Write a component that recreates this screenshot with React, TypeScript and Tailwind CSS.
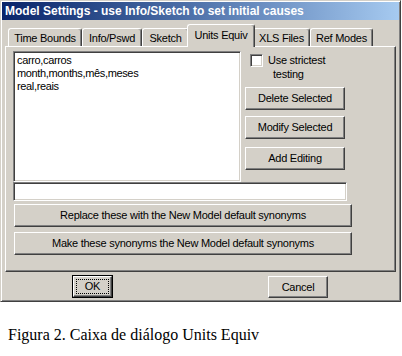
import React from 'react';

const tabs = [
  { label: 'Time Bounds', w: 'w-[74px]' },
  { label: 'Info/Pswd', w: 'w-[60px]' },
  { label: 'Sketch', w: 'w-[47px]' },
  { label: 'Units Equiv', w: 'w-[68px]', active: true },
  { label: 'XLS Files', w: 'w-[57px]' },
  { label: 'Ref Modes', w: 'w-[63px]' },
];

const raised =
  'bg-[#d4d0c8] border border-t-white border-l-white border-r-[#404040] border-b-[#404040] shadow-[inset_-1px_-1px_0_#808080]';
const sunken =
  'bg-white border border-t-[#808080] border-l-[#808080] border-r-white border-b-white shadow-[inset_1px_1px_0_#404040,inset_-1px_-1px_0_#d4d0c8]';

const Btn: React.FC<{ className?: string; children: React.ReactNode }> = ({ className = '', children }) => (
  <div className={`${raised} flex items-center justify-center ${className}`}>{children}</div>
);

export default function App() {
  return (
    <div className="w-[402px] h-[356px] bg-white text-black text-[11px] tracking-[-0.25px] font-['Liberation_Sans',Arial,sans-serif]">
      {/* dialog window */}
      <div className="w-[401px] h-[302px] p-[1px] bg-[#d4d0c8] border border-t-[#d4d0c8] border-l-[#d4d0c8] border-r-[#404040] border-b-[#404040] shadow-[inset_1px_1px_0_#fff,inset_-1px_-1px_0_#808080] flex flex-col">
        <div className="h-[18px] flex items-center pl-[3px] bg-gradient-to-r from-[#0a246a] to-[#a6caf0] text-white font-bold text-[12px] tracking-normal">
          Model Settings - use Info/Sketch to set initial causes
        </div>

        {/* tab strip */}
        <div className="mt-[4px] ml-[6px] h-[22px] flex items-end">
          {tabs.map((t) =>
            t.active ? (
              <div
                key={t.label}
                className={`${t.w} relative z-10 -mx-[2px] -mb-[1px] h-[23px] bg-[#d4d0c8] border-t border-l border-r border-t-white border-l-white border-r-[#404040] rounded-t-[3px] shadow-[inset_-1px_0_0_#808080] flex justify-center pt-[2px]`}
              >
                {t.label}
              </div>
            ) : (
              <div
                key={t.label}
                className={`${t.w} h-[18px] border-t border-l border-r border-t-white border-l-white border-r-[#404040] rounded-t-[3px] shadow-[inset_-1px_0_0_#808080] flex justify-center pt-[1px]`}
              >
                {t.label}
              </div>
            )
          )}
        </div>

        {/* tab panel */}
        <div className="ml-[3px] w-[391px] h-[226px] border border-t-white border-l-white border-r-[#404040] border-b-[#404040] shadow-[inset_-1px_-1px_0_#808080] pt-[4px] pl-[7px]">
          <div className="flex">
            <div className={`${sunken} w-[228px] h-[131px] pl-[3px] pt-[2px] leading-[13px] tracking-[-0.35px]`}>
              <div>carro,carros</div>
              <div>month,months,mês,meses</div>
              <div>real,reais</div>
            </div>
            <div className="ml-[4px] flex flex-col">
              <div className="mt-[2px] h-[28px] flex items-start pl-[5px]">
                <div className={`${sunken} w-[13px] h-[13px] mt-[1px]`} />
                <div className="ml-[5px] leading-[14px]">
                  <div>Use strictest</div>
                  <div className="pl-[5px]">testing</div>
                </div>
              </div>
              <Btn className="mt-[6px] w-[100px] h-[23px]">Delete Selected</Btn>
              <Btn className="mt-[6px] w-[100px] h-[23px]">Modify Selected</Btn>
              <Btn className="mt-[8px] w-[100px] h-[23px]">Add Editing</Btn>
            </div>
          </div>
          <div className={`${sunken} w-[334px] h-[19px]`} />
          <Btn className="mt-[3px] ml-[1px] w-[338px] h-[23px]">Replace these with the New Model default synonyms</Btn>
          <Btn className="mt-[5px] ml-[1px] w-[338px] h-[23px]">Make these synonyms the New Model default synonyms</Btn>
        </div>

        {/* OK / Cancel */}
        <div className="mt-[3px] flex items-start">
          <div className="ml-[70px] w-[41px] h-[23px] border border-black">
            <div className={`${raised} w-full h-full p-[2px]`}>
              <div className="w-full h-full border border-dotted border-black flex items-center justify-center">OK</div>
            </div>
          </div>
          <Btn className="ml-[155px] mt-[1px] w-[60px] h-[22px]">Cancel</Btn>
        </div>
      </div>

      <p className="mt-[25px] ml-[8px] text-[16px] leading-4 tracking-normal font-['Liberation_Serif','Times_New_Roman',serif]">
        Figura 2. Caixa de diálogo Units Equiv
      </p>
    </div>
  );
}
